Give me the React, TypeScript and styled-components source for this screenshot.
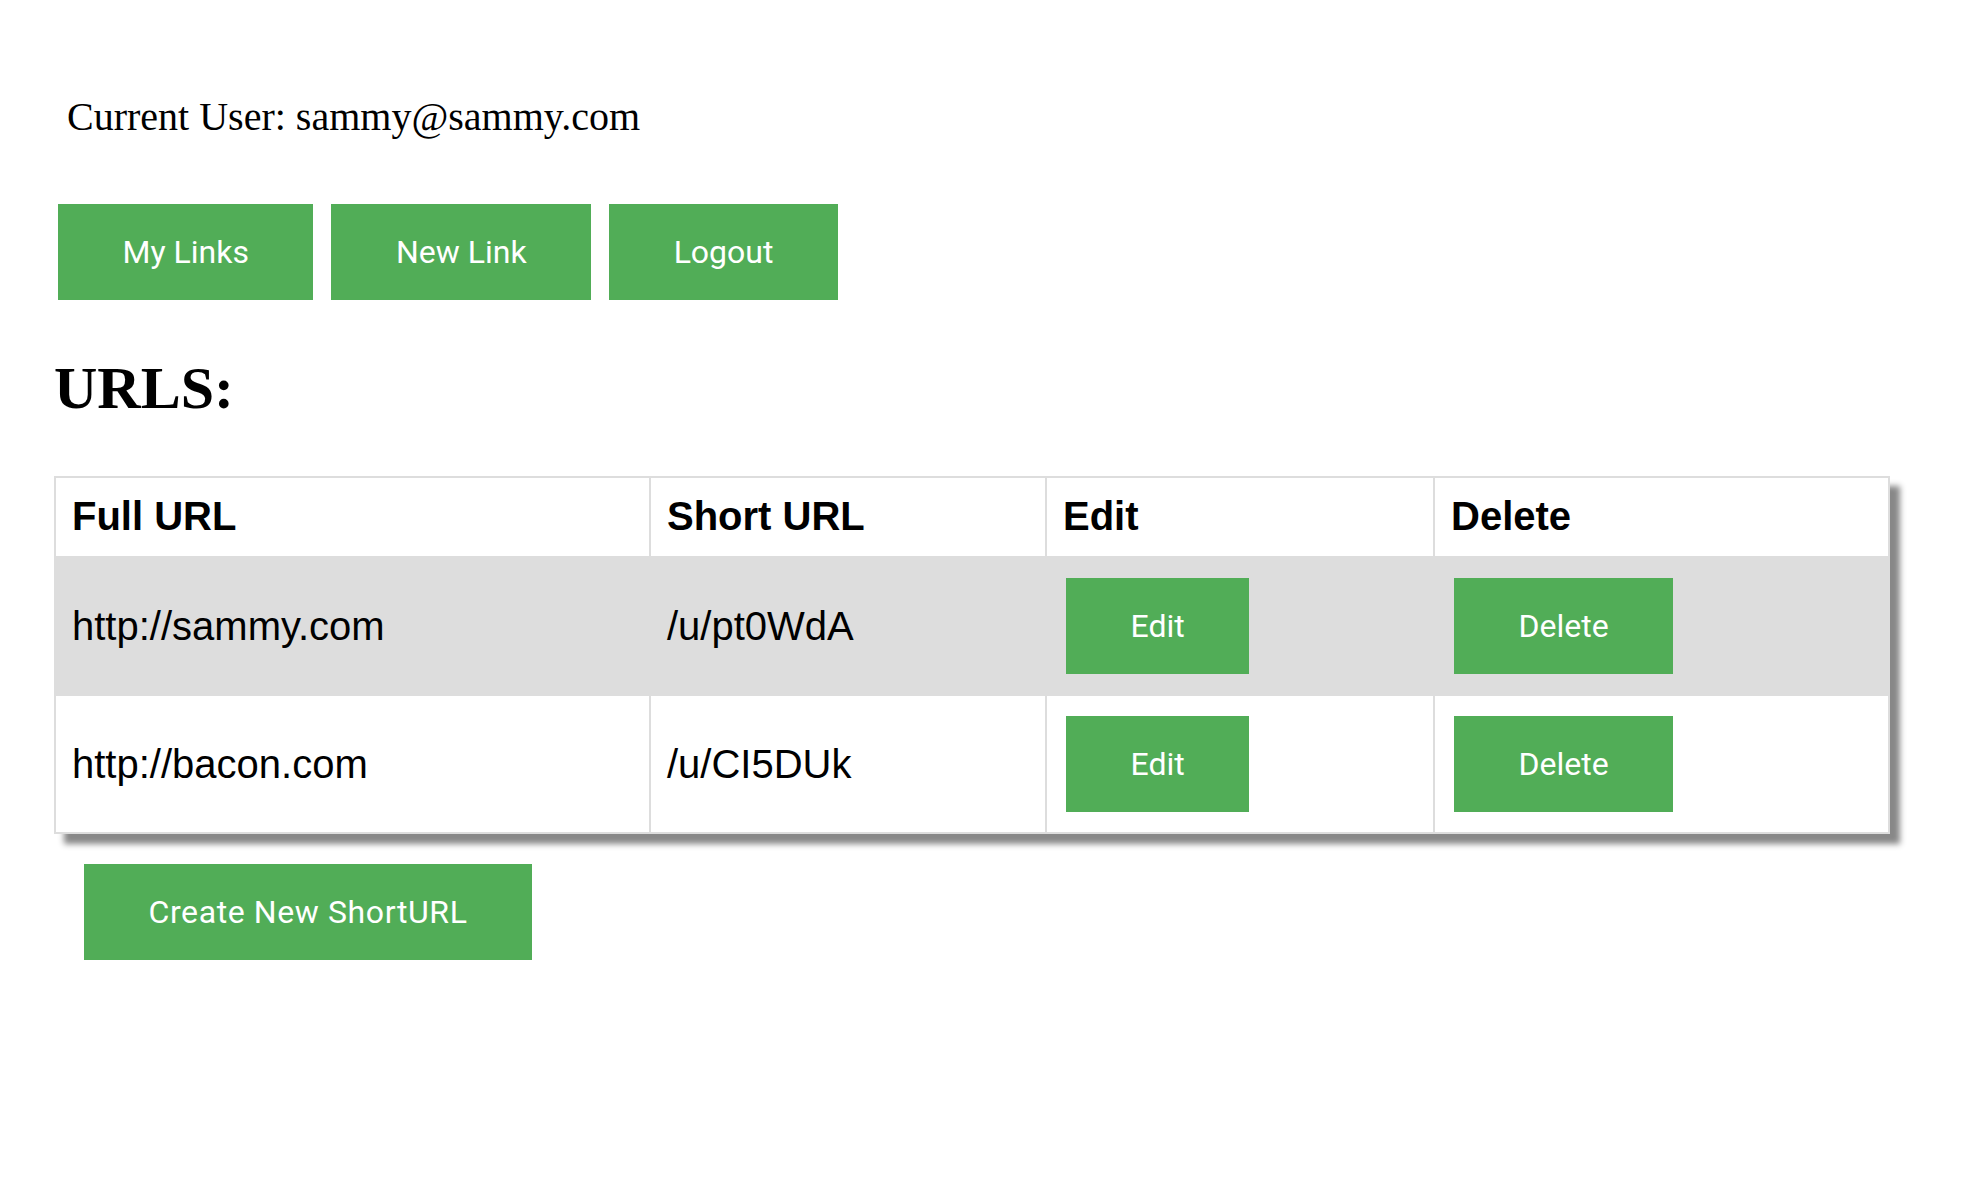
import styled, { createGlobalStyle } from 'styled-components'

const GlobalStyle = createGlobalStyle`
  html, body {
    margin: 0;
    padding: 0;
    background: #fff;
    color: #000;
  }
`

const Page = styled.div`
  display: flex;
  flex-direction: column;
  align-items: flex-start;
  padding: 94px 0 0 54px;
`

const CurrentUser = styled.p`
  margin: 0 0 0 13px;
  font-family: 'Liberation Serif', 'Times New Roman', serif;
  font-size: 40px;
  line-height: 46px;
`

const Nav = styled.nav`
  display: flex;
  gap: 18px;
  margin: 64px 0 0 4px;
`

const GreenButton = styled.button`
  display: inline-block;
  border: 0;
  border-radius: 0;
  background: #51ad57;
  color: #fff;
  font-family: Roboto, 'Liberation Sans', Arial, sans-serif;
  font-size: 32px;
  font-weight: 400;
  line-height: 36px;
  padding: 30px 64.5px;
  cursor: pointer;
`

const CellButton = styled(GreenButton)`
  display: block;
  margin: 4px 3px;
`

const CreateButton = styled(GreenButton)`
  margin: 30px 0 0 30px;
  padding: 30px 64.5px;
  letter-spacing: 0.6px;
`

const Title = styled.h1`
  margin: 53px 0 0 0;
  font-family: 'Liberation Serif', 'Times New Roman', serif;
  font-size: 60px;
  font-weight: 700;
  line-height: 70px;
`

const Table = styled.table`
  margin-top: 53px;
  width: 1834px;
  table-layout: fixed;
  border-collapse: collapse;
  border: 2px solid #ddd;
  box-shadow: 10px 10px 6px #888;
  font-family: 'Liberation Sans', Arial, Helvetica, sans-serif;
  font-size: 40px;
`

const Th = styled.th`
  border: 2px solid #ddd;
  padding: 15px 16px 17px;
  line-height: 46px;
  text-align: left;
  font-weight: 700;
`

const Row = styled.tr<{ $striped?: boolean }>`
  background: ${({ $striped }) => ($striped ? '#ddd' : '#fff')};
`

const Td = styled.td`
  border: 2px solid #ddd;
  padding: 16px;
  line-height: 46px;
  vertical-align: middle;
`

const urls = [
  { full: 'http://sammy.com', short: '/u/pt0WdA' },
  { full: 'http://bacon.com', short: '/u/CI5DUk' }
]

export default function App() {
  return (
    <>
      <GlobalStyle />
      <Page>
        <CurrentUser>Current User: sammy@sammy.com</CurrentUser>
        <Nav>
          <GreenButton>My Links</GreenButton>
          <GreenButton>New Link</GreenButton>
          <GreenButton>Logout</GreenButton>
        </Nav>
        <Title>URLS:</Title>
        <Table>
          <colgroup>
            <col style={{ width: 595 }} />
            <col style={{ width: 396 }} />
            <col style={{ width: 388 }} />
            <col style={{ width: 455 }} />
          </colgroup>
          <thead>
            <tr>
              <Th>Full URL</Th>
              <Th>Short URL</Th>
              <Th>Edit</Th>
              <Th>Delete</Th>
            </tr>
          </thead>
          <tbody>
            {urls.map((u, i) => (
              <Row key={u.short} $striped={i % 2 === 0}>
                <Td>{u.full}</Td>
                <Td>{u.short}</Td>
                <Td>
                  <CellButton>Edit</CellButton>
                </Td>
                <Td>
                  <CellButton>Delete</CellButton>
                </Td>
              </Row>
            ))}
          </tbody>
        </Table>
        <CreateButton>Create New ShortURL</CreateButton>
      </Page>
    </>
  )
}
